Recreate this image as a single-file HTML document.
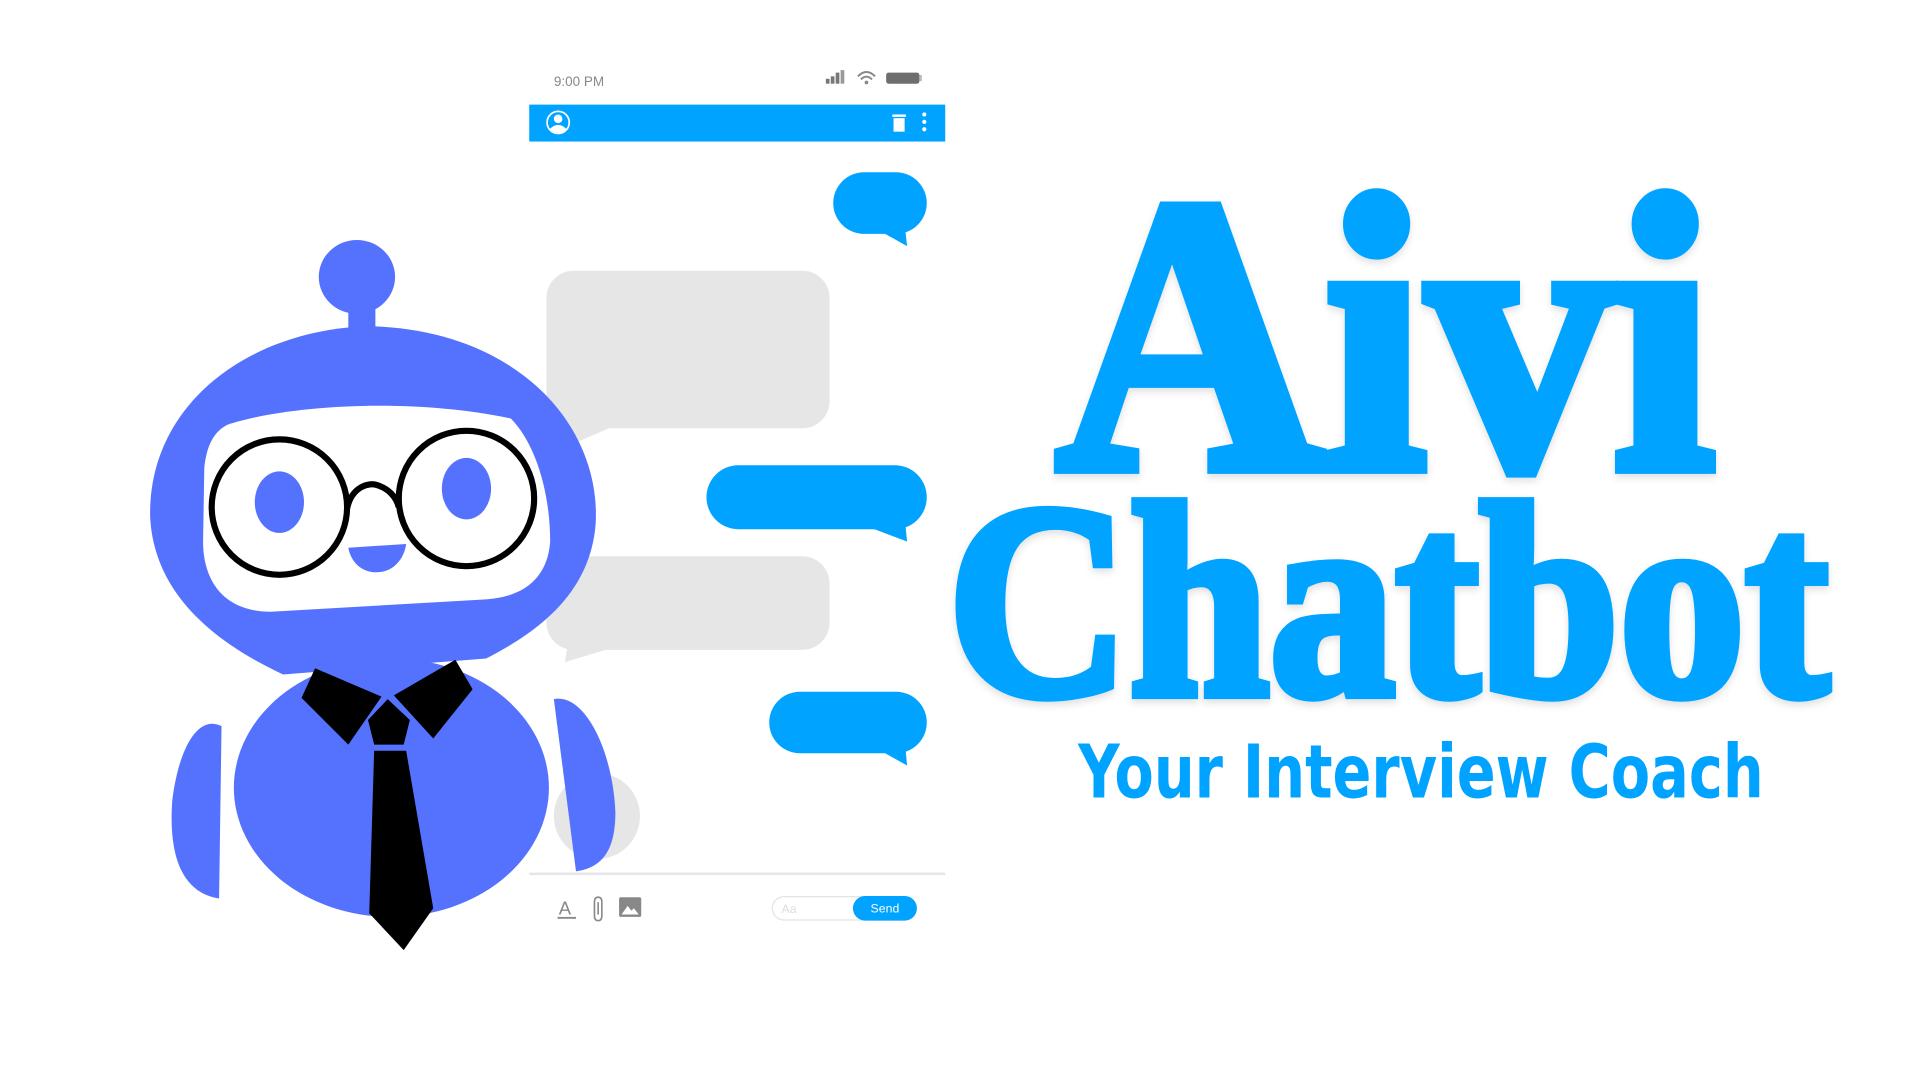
<!DOCTYPE html>
<html><head><meta charset="utf-8"><style>
html,body{margin:0;padding:0;background:#fff;width:1920px;height:1080px;overflow:hidden}
svg{display:block}
.sans{font-family:"Liberation Sans",Arial,sans-serif}
.serif{font-family:"Liberation Serif",serif;font-weight:bold}
.tag{font-family:"DejaVu Sans","Liberation Sans",sans-serif;font-weight:bold}
</style></head><body>
<svg width="1920" height="1080" viewBox="0 0 1560 877.5" preserveAspectRatio="none" xmlns="http://www.w3.org/2000/svg">
<defs><filter id="sh" x="-5%" y="-5%" width="110%" height="115%"><feDropShadow dx="0" dy="3" stdDeviation="3" flood-color="#000" flood-opacity="0.12"/></filter></defs>
<text x="450" y="70" class="sans" font-size="11" fill="#888">9:00 PM</text>
<rect x="671" y="64" width="3" height="4" fill="#777"/><rect x="675" y="62" width="3" height="6" fill="#777"/><rect x="679" y="59" width="3" height="9" fill="#777"/><rect x="683" y="57" width="3" height="11" fill="#999"/>
<path d="M697 62 Q704 55 711 62" stroke="#888" stroke-width="1.6" fill="none"/><path d="M699.5 64.5 Q704 60 708.5 64.5" stroke="#888" stroke-width="1.6" fill="none"/><circle cx="704" cy="67" r="1.5" fill="#888"/>
<rect x="720" y="59" width="27" height="9" rx="2" fill="#6e6e6e"/><rect x="747" y="61" width="2" height="5" fill="#bbb"/>
<rect x="430" y="85" width="338" height="30" fill="#00a3ff"/>
<circle cx="453.5" cy="99.5" r="9" fill="none" stroke="#fff" stroke-width="1.4"/><circle cx="453.5" cy="96.5" r="3.5" fill="#fff"/><path d="M446.5 105 Q453.5 98 460.5 105 Q453.5 111 446.5 105Z" fill="#fff"/>
<rect x="725" y="93" width="11" height="2" fill="#fff"/><rect x="726" y="96" width="9" height="11" fill="#fff"/>
<circle cx="751" cy="93" r="1.7" fill="#fff"/><circle cx="751" cy="99" r="1.7" fill="#fff"/><circle cx="751" cy="105" r="1.7" fill="#fff"/>
<rect x="677" y="140" width="76" height="50" rx="25" fill="#00a3ff"/><path d="M712 186 L737 200 L735 182Z" fill="#00a3ff"/>
<rect x="444" y="220" width="230" height="128" rx="22" fill="#e6e6e6"/><path d="M465 340 L495 348 L462 362Z" fill="#e6e6e6"/>
<rect x="574" y="378" width="179" height="52" rx="26" fill="#00a3ff"/><path d="M700 426 L737 440 L735 420Z" fill="#00a3ff"/>
<rect x="444" y="452" width="230" height="76" rx="22" fill="#e6e6e6"/><path d="M462 520 L492 528 L459 538Z" fill="#e6e6e6"/>
<rect x="625" y="562" width="128" height="50" rx="25" fill="#00a3ff"/><path d="M712 608 L737 622 L735 600Z" fill="#00a3ff"/>
<circle cx="485" cy="663" r="35" fill="#e6e6e6"/>
<rect x="430" y="709" width="338" height="2" fill="#e6e6e6"/>
<text x="454" y="743" class="sans" font-size="15" fill="#888">A</text><rect x="453" y="745" width="15" height="1.5" fill="#888"/>
<path d="M483 744 L483 733 Q483 729 486 729 Q489 729 489 733 L489 744 Q489 748 486 748 Q483 748 483 744 M486 733 L486 743" stroke="#888" stroke-width="1.3" fill="none"/>
<rect x="503" y="729" width="18" height="16" rx="1.5" fill="#888"/><path d="M505 743 L510 736 L513 740 L515 738 L519 743Z" fill="#fff"/>
<rect x="627.5" y="728.5" width="117" height="19" rx="9.5" fill="#fff" stroke="#e4e4e4"/>
<text x="635" y="742" class="sans" font-size="10" fill="#ddd">Aa</text>
<rect x="693" y="728" width="52" height="20" rx="10" fill="#00a3ff"/>
<text x="719" y="741.5" text-anchor="middle" class="sans" font-size="10" fill="#fff">Send</text>
<g fill="#5572ff">
<ellipse cx="290" cy="225" rx="31" ry="30"/>
<rect x="283" y="243" width="22" height="27"/>
<path d="M300 265 C420 268 488 345 484 425 C480 480 440 512 395 535 L230 548 C170 520 125 480 122 420 C120 330 200 268 300 265Z"/>
<ellipse cx="318" cy="640" rx="128" ry="105"/>
<path d="M180 590 C160 580 145 610 140 650 C137 690 145 725 178 730Z"/>
<path d="M450 568 C475 563 498 610 500 660 C500 690 490 705 468 708Z"/>
</g>
<path d="M185 345 C230 330 330 322 415 340 C435 360 447 400 447 440 C445 470 425 485 395 487 L220 497 C180 497 165 470 165 440 L166 380 C168 360 175 350 185 345Z" fill="#fff"/>
<ellipse cx="227" cy="408" rx="20" ry="25" fill="#5572ff"/>
<ellipse cx="379" cy="397" rx="20" ry="25" fill="#5572ff"/>
<path d="M283 445 L330 442 C328 456 318 465 306 465 C293 465 285 456 283 445Z" fill="#5572ff"/>
<circle cx="227" cy="412" r="55" fill="none" stroke="#000" stroke-width="5"/>
<circle cx="379" cy="405" r="55" fill="none" stroke="#000" stroke-width="5"/>
<path d="M282 413 C286 395 300 392 306 394 C316 397 322 404 324 412" fill="none" stroke="#000" stroke-width="5"/>
<g fill="#000">
<path d="M256 543 L310 566 L283 605 L245 567Z"/>
<path d="M370 536 L384 560 L352 600 L320 565Z"/>
<path d="M315 568 L333 585 L328 605 L304 605 L299 585Z"/>
<path d="M304 610 L330 610 L352 738 L328 772 L300 742Z"/>
</g>
<g fill="#00a3ff" stroke="#00a3ff" filter="url(#sh)">
<text x="858" y="380" class="serif" font-size="320" stroke-width="10" textLength="536" lengthAdjust="spacingAndGlyphs">Aivi</text>
<text x="770" y="564" class="serif" font-size="225" stroke-width="8" textLength="716" lengthAdjust="spacingAndGlyphs">Chatbot</text>
</g>
<text x="876" y="648" fill="#00a3ff" class="tag" font-size="60" textLength="557" lengthAdjust="spacingAndGlyphs">Your Interview Coach</text>
</svg>
</body></html>
